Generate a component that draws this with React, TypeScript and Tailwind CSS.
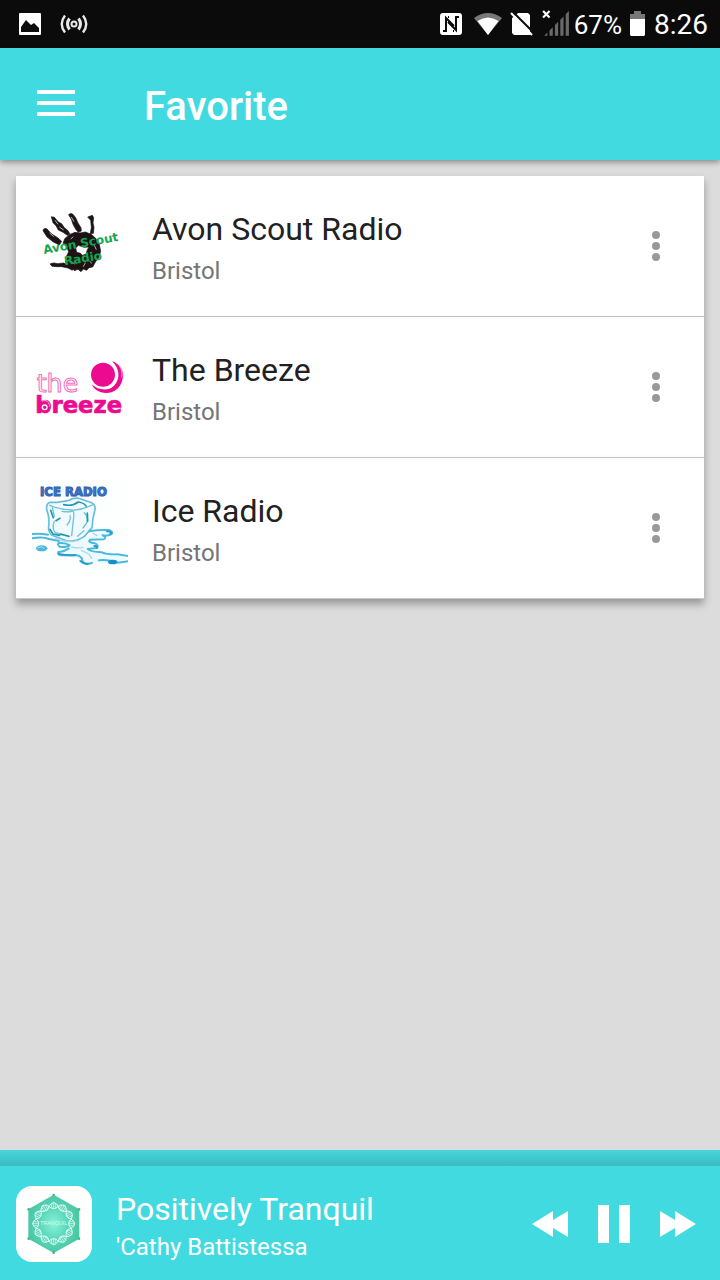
import { useState } from 'react'

interface Station {
  id: string
  name: string
  city: string
  Logo: () => React.JSX.Element
}

const STATIONS: Station[] = [
  { id: 'avon-scout', name: 'Avon Scout Radio', city: 'Bristol', Logo: AvonScoutLogo },
  { id: 'the-breeze', name: 'The Breeze', city: 'Bristol', Logo: BreezeLogo },
  { id: 'ice-radio', name: 'Ice Radio', city: 'Bristol', Logo: IceLogo },
]

// angles of the beads in the tranquil ring
const RING = [0, 30, 60, 90, 120, 150, 180, 210, 240, 270, 300, 330]

function AvonScoutLogo() {
  return (
    <svg viewBox="24 24 288 288" className="size-24 shrink-0" aria-hidden="true">
      <g fill="#1c1315" stroke="#1c1315" strokeWidth="2">
        <path d="M57 122Q58 113 68 116L83 132 101 143 113 154 106 165 88 156 69 141Z" />
        <path d="M82 80L91 82 103 96 113 101 121 113 131 121 138 132 130 136 117 127 103 120 96 107 87 98Z" />
        <path d="M134 74Q139 67 147 73L155 83 162 99 171 113 172 123 163 127 156 119 147 103 142 88Z" />
        <path d="M191 81L205 76 209 83 207 99 210 112 208 130 199 131 202 112 200 91Z" />
        <path fillRule="evenodd" d="M122 146L136 134 153 127 168 129 184 126 202 133 216 146 226 163 230 184 224 204 216 213 206 231 195 233 188 241 178 237 171 245 162 238 151 242 147 234 132 226 124 216 128 198 134 185 128 170 117 160ZM163 166L155 174 158 187 170 190 174 196 186 193 190 179 195 171 180 172Z" />
        <path d="M78 222Q88 216 101 221L119 219 136 226 151 235 145 241 132 234 113 230 99 230 84 229Z" />
      </g>
      <g stroke="#fff" strokeWidth="2" fill="none">
        <path d="M93 91l9 12M106 111l13 9M142 81l8 14M77 129l12 11M143 214l9 9M184 218l-6 12M211 166l6 13M140 147l8-7M196 213l8 7" />
      </g>
      <g fill="#12a650" fontFamily="'DejaVu Sans', sans-serif" fontWeight="700">
        <text x="60" y="192" fontSize="36" transform="rotate(-10 60 192)">Avon Scout</text>
        <text x="122" y="226" fontSize="36" transform="rotate(-9 122 226)">Radio</text>
      </g>
    </svg>
  )
}

function BreezeLogo() {
  return (
    <svg viewBox="24 -3 288 288" className="size-24 shrink-0" aria-hidden="true">
      <circle cx="237" cy="104" r="36" fill="#ec0b90" />
      <path d="M264 64C289 71 299 91 297 111C292 149 261 166 231 157C218 153 208 145 203 133C224 152 253 154 270 137C290 117 287 85 264 64Z" fill="#ec0b90" />
      <path d="M274 66C290 77 296 93 293 112" fill="none" stroke="#fff" strokeWidth="2" />
      <g fontFamily="'DejaVu Sans', sans-serif">
        <text x="38" y="156" fontSize="76" fill="#fff" stroke="#ef70bc" strokeWidth="3">the</text>
        <text x="34" y="218" fontSize="68" fontWeight="700" fill="#ec0b90" stroke="#ec0b90" strokeWidth="2">breeze</text>
      </g>
      <circle cx="62" cy="199" r="18" fill="#ec0b90" />
      <circle cx="62" cy="202" r="9" fill="#fff" />
      <circle cx="62" cy="202" r="5" fill="#ec0b90" />
      <path d="M54 184C66 177 76 186 77 200" fill="none" stroke="#fff" strokeWidth="2" />
    </svg>
  )
}

function IceLogo() {
  return (
    <svg viewBox="24 15 288 288" className="size-24 shrink-0" aria-hidden="true">
      <rect x="24" y="15" width="288" height="288" fill="#fdfefe" />
      <g fill="none" strokeLinecap="round" strokeLinejoin="round">
        <path d="M24 183L90 186 190 182 252 168 262 178 236 187 200 196 216 210 191 222 205 232 280 240 312 250 266 266 204 264 170 252 110 238 106 210 140 208 90 192Z" fill="#eefafe" />
        <path d="M78 82Q64 88 69 107Q77 127 74 153Q72 171 84 181L130 198Q160 199 181 184L204 158Q205 132 212 108Q217 91 203 83L164 70Q150 67 135 76L100 82Z" fill="#f1fbff" stroke="#69bedc" strokeWidth="5" />
        <path d="M77 91Q107 104 146 105Q152 111 148 136L143 182M151 105Q177 104 207 89M85 98L91 124M91 139Q83 158 93 172L116 180M114 109Q131 112 144 109M138 122Q142 137 129 150M181 113Q194 125 188 144L177 159M161 184L180 167" stroke="#6cc3de" strokeWidth="4" />
        <path d="M119 89Q145 95 163 81Q181 84 186 93M80 106L88 128M78 163L87 177L107 181M110 177L135 184M190 114L191 139M96 137L108 130" stroke="#2497ad" strokeWidth="5" />
        <path d="M24 177Q49 175 72 179M24 190Q55 184 75 192L105 198M196 169Q222 164 252 165Q268 168 263 177Q250 184 236 181Q250 188 239 193L198 194Q189 202 213 205Q226 211 218 219L191 222Q197 230 234 232Q248 239 280 238L312 243M105 204Q124 202 137 211Q133 218 107 215Q98 207 105 204M134 221Q121 230 102 232Q102 242 116 241L153 240Q176 243 175 258Q184 270 204 264M225 256Q253 252 281 263L312 259" stroke="#48badf" strokeWidth="6" />
        <path d="M104 237Q130 242 154 240M169 258Q181 269 192 266M211 213Q223 214 218 219M249 169Q266 170 259 177" stroke="#2b9ccb" strokeWidth="6" />
        <path d="M95 190Q127 206 163 197M143 216Q161 221 177 217M206 174L219 182M172 226L195 237L203 250" stroke="#acd9e7" strokeWidth="4" />
      </g>
      <ellipse cx="53" cy="220" rx="17" ry="9" fill="#4ab7df" />
      <path d="M41 219q12-8 20 1" fill="none" stroke="#a7e2f5" strokeWidth="3" />
      <ellipse cx="266" cy="261" rx="14" ry="7" fill="#168fca" />
      <text x="48" y="62" fontFamily="'DejaVu Sans', sans-serif" fontWeight="700" fontSize="35" fill="#3d78c9" stroke="#3161ad" strokeWidth="3">ICE RADIO</text>
    </svg>
  )
}

function TranquilCover() {
  return (
    <svg viewBox="48 138 228 228" className="size-19 shrink-0 rounded-2xl bg-white" aria-hidden="true">
      <defs>
        <radialGradient id="tranquil">
          <stop offset="0" stopColor="#88f3da" />
          <stop offset="0.55" stopColor="#5bd7b9" />
          <stop offset="1" stopColor="#4bc7a6" />
        </radialGradient>
      </defs>
      <path d="M161 164L238 208V296L161 339L85 296V208Z" fill="url(#tranquil)" />
      <g fill="#43b998">
        <circle cx="161" cy="165" r="4" />
        <circle cx="237" cy="208" r="4" />
        <circle cx="237" cy="296" r="4" />
        <circle cx="161" cy="338" r="4" />
        <circle cx="86" cy="296" r="4" />
        <circle cx="86" cy="208" r="4" />
      </g>
      {RING.map((angle) => (
        <g key={angle} transform={`rotate(${angle} 161 251)`} fill="none" stroke="#e2fff7" strokeWidth="3">
          <path d="M147 199Q161 177 175 199Q161 213 147 199Z" />
          <path d="M155 191V205M161 188V207M167 191V205" strokeWidth="2" />
        </g>
      ))}
      <text x="161" y="256" textAnchor="middle" fontFamily="'Liberation Sans', sans-serif" fontSize="16" fill="#c7fff0">TRANQUIL</text>
    </svg>
  )
}

function StatusBar() {
  return (
    <div className="flex h-12 shrink-0 items-center bg-[#0b0b0b] pr-3 pl-4 text-white">
      <svg viewBox="0 0 28 28" className="size-7" aria-hidden="true">
        <rect x="3" y="3" width="22" height="22" rx="1" fill="#fff" />
        <path d="M5 22V17L10 10 15 15 18 13 23 18V22Z" fill="#0b0b0b" />
      </svg>
      <svg viewBox="0 0 28 20" className="ml-4 h-5 w-7" fill="none" stroke="#e9e9e9" aria-hidden="true">
        <circle cx="14" cy="10" r="2.5" strokeWidth="2" />
        <path d="M9.500 4.500Q5.500 10 9.500 15.500M18.500 4.500Q22.500 10 18.500 15.500" strokeWidth="3" />
        <path d="M5 1.500Q-1.500 10 5 18.500M23 1.500Q29.500 10 23 18.500" strokeWidth="2.400" />
      </svg>

      <div className="ml-auto flex items-center">
        <svg viewBox="0 0 22 22" className="size-[22px]" aria-hidden="true">
          <rect width="22" height="22" rx="3" fill="#fff" />
          <path d="M3 18H6V5L14 13M8 4L9 4M19 4H16V17L8 9M13 18L14 18" fill="none" stroke="#0b0b0b" strokeWidth="2" />
        </svg>
        <svg viewBox="0 0 28 24" className="ml-3 h-6 w-7" aria-hidden="true">
          <path d="M0 6Q14-4 28 6L14 23Z" fill="#777" />
          <path d="M3.500 9Q14 2 24.500 9L14 23Z" fill="#fff" />
        </svg>
        <svg viewBox="0 0 24 24" className="ml-2 size-6" aria-hidden="true">
          <path d="M8 1H18L20 3V20L5 4Z" fill="#fff" />
          <path d="M2 6L5 4L20 20V23H4L2 21Z" fill="#fff" />
          <path d="M3 0L24 21" stroke="#0b0b0b" strokeWidth="2" />
          <path d="M1 1L22 23" stroke="#fff" strokeWidth="2" />
        </svg>
        <svg viewBox="0 0 26 26" className="ml-2 size-7" aria-hidden="true">
          <path d="M2 24L5 21V24ZM7 24V19L10 16V24ZM12 24V14L15 11V24ZM17 24V9L20 6V24ZM22 24V4L25 1V24Z" fill="#696969" />
          <path d="M1 1L7 7M7 1L1 7" stroke="#fff" strokeWidth="2" />
        </svg>
        <span className="ml-1 pt-0.5 text-[26px] leading-8">67%</span>
        <svg viewBox="0 0 16 26" className="ml-2 h-7 w-4" aria-hidden="true">
          <path d="M0 3H4V0H11V3H15V8H0Z" fill="#777" />
          <path d="M0 8H15V24L14 25H1L0 24Z" fill="#fff" />
        </svg>
        <time className="ml-2 pt-0.5 text-[28px] leading-8">8:26</time>
      </div>
    </div>
  )
}

function StationRow({ station }: { station: Station }) {
  const { name, city, Logo } = station
  return (
    <li className="flex h-[141px] items-center border-b border-[#c8c8c8] bg-white pl-4 shadow-[0_5px_8px_rgba(0,0,0,0.32)]">
      <Logo />
      <div className="flex min-w-0 flex-1 flex-col gap-0.5 pt-2 pl-6">
        <h2 className="truncate text-[32px] leading-10 text-[#212121]">{name}</h2>
        <p className="truncate text-2xl leading-10 text-[#757575]">{city}</p>
      </div>
      <button type="button" aria-label={`Options for ${name}`} className="flex h-full w-24 items-center justify-center">
        <svg viewBox="0 0 8 32" className="h-8 w-2" fill="#999" aria-hidden="true">
          <circle cx="4" cy="5" r="4" />
          <circle cx="4" cy="16" r="4" />
          <circle cx="4" cy="27" r="4" />
        </svg>
      </button>
    </li>
  )
}

function Player() {
  const [playing, setPlaying] = useState(true)

  return (
    <footer className="shrink-0 bg-[#42dae1] text-white">
      <div className="h-4 bg-linear-to-b from-[#48d5dc] to-[#3abbc2]" />
      <div className="flex h-[114px] items-center pt-0.5 pl-4">
        <TranquilCover />
        <div className="min-w-0 flex-1 pt-2 pl-6">
          <p className="truncate text-[32px] leading-[38px]">Positively Tranquil</p>
          <p className="truncate text-2xl leading-[38px]">'Cathy Battistessa</p>
        </div>
        <div className="flex items-center gap-2 pr-3.5">
          <button type="button" aria-label="Previous" className="flex h-16 w-14 items-center justify-center">
            <svg viewBox="0 0 36 26" className="h-[26px] w-9" fill="#fff" aria-hidden="true">
              <path d="M0 13L21 0V9L36 0V26L21 17V26Z" />
            </svg>
          </button>
          <button
            type="button"
            aria-label={playing ? 'Pause' : 'Play'}
            onClick={() => setPlaying(!playing)}
            className="flex h-16 w-14 items-center justify-center"
          >
            <svg viewBox="0 0 32 38" className="h-[38px] w-8" fill="#fff" aria-hidden="true">
              {playing ? <path d="M0 0H11V38H0ZM21 0H32V38H21Z" /> : <path d="M0 0L32 19L0 38Z" />}
            </svg>
          </button>
          <button type="button" aria-label="Next" className="flex h-16 w-14 items-center justify-center">
            <svg viewBox="0 0 36 26" className="h-[26px] w-9" fill="#fff" aria-hidden="true">
              <path d="M36 13L15 0V9L0 0V26L15 17V26Z" />
            </svg>
          </button>
        </div>
      </div>
    </footer>
  )
}

export default function App() {
  return (
    <div className="flex min-h-screen flex-col bg-[#dcdcdc] font-[Roboto,sans-serif]">
      <StatusBar />
      <header className="flex h-28 shrink-0 items-center bg-[#42dae1] text-white shadow-[0_2px_6px_rgba(0,0,0,0.4)]">
        <button type="button" aria-label="Open menu" className="flex size-28 items-center justify-center">
          <svg viewBox="0 0 38 28" className="h-7 w-[38px]" fill="#fff" aria-hidden="true">
            <path d="M0 0H38V4H0ZM0 11H38V15H0ZM0 22H38V26H0Z" />
          </svg>
        </button>
        <h1 className="pt-1.5 pl-8 text-[40px] leading-12 font-medium">Favorite</h1>
      </header>
      <main className="flex-1 p-4">
        <ul>
          {STATIONS.map((s) => (
            <StationRow key={s.id} station={s} />
          ))}
        </ul>
      </main>
      <Player />
    </div>
  )
}
